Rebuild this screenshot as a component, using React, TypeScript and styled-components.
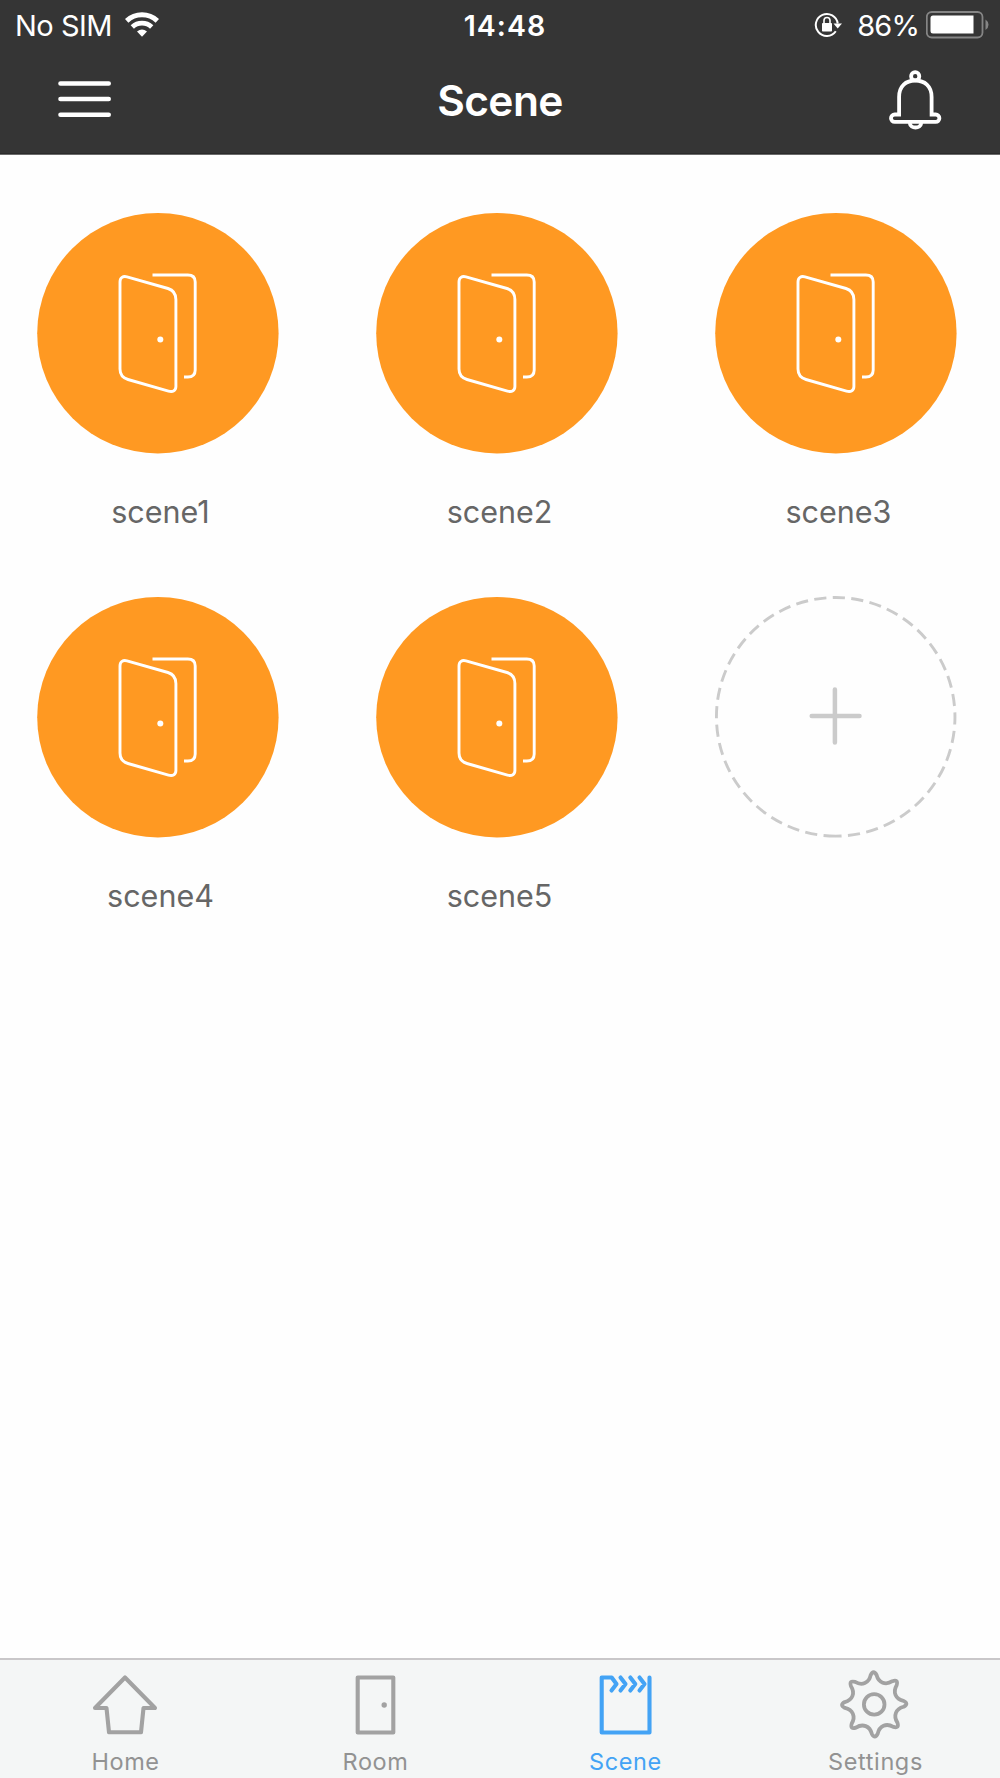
import React from "react";
import styled, { createGlobalStyle } from "styled-components";

const GlobalStyle = createGlobalStyle`
  * { box-sizing: border-box; }
  body { margin: 0; background: #fefefe; }
`;

const Screen = styled.div`
  display: flex;
  flex-direction: column;
  width: 1000px;
  height: 1778px;
  background: #fefefe;
  font-family: Inter, "Liberation Sans", sans-serif;
  overflow: hidden;
`;

const Header = styled.header`
  height: 155px;
  flex: none;
  background: #353535;
  border-bottom: 1px solid #6a6a6a;
  box-shadow: inset 0 -1px 0 #2b2b2b;
  color: #fff;
`;

const StatusBar = styled.div`
  display: grid;
  grid-template-columns: 1fr auto 1fr;
  height: 50px;
  padding: 0 11px 0 15px;
  font-size: 29px;
  line-height: 51px;
`;

const StatusGroup = styled.div<{ $end?: boolean }>`
  display: flex;
  align-items: center;
  height: 50px;
  justify-content: ${(p) => (p.$end ? "flex-end" : "flex-start")};
`;

const StatusText = styled.span<{ $spacing: number }>`
  letter-spacing: ${(p) => p.$spacing}px;
`;

const Clock = styled.span`
  font-weight: 600;
  font-size: 28.5px;
  letter-spacing: 1px;
  padding-left: 6px;
`;

const WifiIcon = styled.svg`
  margin: 0 0 1px 13px;
`;

const LockIcon = styled.svg`
  margin: 0 15px 1px 0;
`;

const BatteryIcon = styled.svg`
  margin: 0 0 1px 7px;
`;

const NavBar = styled.div`
  display: flex;
  justify-content: space-between;
  align-items: center;
  height: 104px;
  padding: 0 56px;
`;

const NavButton = styled.button`
  display: block;
  width: 57px;
  height: 104px;
  padding: 0;
  border: 0;
  background: none;
`;

const Title = styled.h1`
  margin: 0;
  height: 104px;
  font-size: 42.5px;
  line-height: 101px;
  font-weight: 600;
  letter-spacing: -0.6px;
`;

const Content = styled.main`
  flex: 1;
  padding: 58px 0 0 37px;
`;

const SceneGrid = styled.div`
  display: grid;
  grid-template-columns: repeat(3, 242px);
  column-gap: 97px;
  row-gap: 67px;
`;

const SceneCard = styled.div`
  display: flex;
  flex-direction: column;
  gap: 40px;
  height: 317px;
`;

const SceneCircle = styled.div`
  width: 242px;
  height: 241px;
`;

const SceneName = styled.div`
  padding-left: 5px;
  text-align: center;
  font-size: 30.5px;
  line-height: 36px;
  color: #666;
`;

const TabBar = styled.nav`
  display: grid;
  grid-template-columns: repeat(4, 1fr);
  flex: none;
  height: 120px;
  border-top: 2px solid #c9c7c9;
  background: #f4f6f6;
`;

const Tab = styled.div<{ $active?: boolean }>`
  display: flex;
  flex-direction: column;
  align-items: center;
  padding-top: 10px;
  color: ${(p) => (p.$active ? "#43a3f5" : "#a2a2a2")};
`;

const TabLabel = styled.span<{ $active?: boolean }>`
  margin-top: 8px;
  padding-left: 1px;
  font-size: 23.5px;
  line-height: 28px;
  letter-spacing: 0.6px;
  color: ${(p) => (p.$active ? "#43a3f5" : "#929292")};
`;

const DoorDrawing = () => (
  <svg width="242" height="241" viewBox="0 0 242 241" fill="none" stroke="#fff" strokeWidth="2.9">
    <ellipse cx="120.900" cy="120.200" rx="120.700" ry="120.200" fill="#ff9922" stroke="none" />
    <path d="M83 69 C83 64.500 86 62.800 90 63.900 L131 75.500 C136.500 77.200 138.900 81 138.900 86.500 V173.500 C138.900 177.500 136 179.300 131.500 178.100 L91 166.500 C86 165 83 161 83 156 Z" />
    <path d="M115.500 62 H150.800 Q158.200 62 158.200 69 V157 Q158.200 164 150.800 164 H147" />
    <circle cx="123.300" cy="126.500" r="3" fill="#fff" stroke="none" />
  </svg>
);

const AddDrawing = () => (
  <svg width="242" height="241" viewBox="0 0 242 241" fill="none" stroke="#cbcbcb">
    <path
      d="M120.700 238.900 A119.300 119.300 0 0 1 120.700 0.300 A119.300 119.300 0 0 1 120.700 238.900"
      transform="translate(0 .2)"
      strokeWidth="2.900"
      strokeDasharray="12.2 6.380"
      overflow="visible"
    />
    <path d="M119.900 92.500 V145.500 M96.700 119 H144.500" strokeWidth="4.500" strokeLinecap="round" />
  </svg>
);

const AddCircle = styled(SceneCircle)`
  svg { overflow: visible; }
`;

const HomeDrawing = () => (
  <path d="M35 7.500 L65 38 H53.500 L51 62.300 H19 L16.500 38 H5 Z" />
);

const RoomDrawing = () => (
  <>
    <rect x="17.700" y="7.500" width="35.600" height="55" />
    <circle cx="44.200" cy="35" r="2.700" fill="currentColor" stroke="none" />
  </>
);

const SceneDrawing = () => (
  <>
    <path d="M21.500 20.500 L26.500 14 L21.700 7.500 H11.700 V62.500 H59.500 V7.500" />
    <path d="M30.500 7.500 L35.500 14 L30.500 20.500 M40.300 7.500 L45.300 14 L40.300 20.500 M49.500 7.500 L54.500 14 L49.500 20.500" />
  </>
);

const polar = (r: number, a: number) =>
  `${(34.2 + r * Math.sin(a - 0.02)).toFixed(2)} ${(34.4 - r * Math.cos(a - 0.02)).toFixed(2)}`;

const gearPath = () => {
  const step = Math.PI / 4;
  let d = `M${polar(29.5, -0.1)}`;
  for (let i = 0; i < 8; i++) {
    const a = i * step;
    d += ` Q${polar(35, a)} ${polar(29.5, a + 0.1)}`;
    d += ` C${polar(22, a + 0.22)} ${polar(22, a + step - 0.22)} ${polar(29.5, a + step - 0.1)}`;
  }
  return d + "Z";
};

const SettingsDrawing = () => (
  <>
    <path d={gearPath()} strokeWidth="3.800" />
    <circle cx="34.200" cy="34.400" r="10.300" strokeWidth="3.800" />
  </>
);

const tabs = [
  { label: "Home", Drawing: HomeDrawing },
  { label: "Room", Drawing: RoomDrawing },
  { label: "Scene", Drawing: SceneDrawing, active: true },
  { label: "Settings", Drawing: SettingsDrawing },
];

const scenes = ["scene1", "scene2", "scene3", "scene4", "scene5"];

export default function App() {
  return (
    <Screen>
      <GlobalStyle />
      <Header>
        <StatusBar>
          <StatusGroup>
            <StatusText $spacing={-0.5}>No SIM</StatusText>
            <WifiIcon width="34" height="25" viewBox="0 0 34 25">
              <g fill="none" stroke="#fff">
                <path d="M1.700 8.800 A22.500 22.500 0 0 1 32.300 8.800" strokeWidth="5" />
                <path d="M7.300 14.900 A14.200 14.200 0 0 1 26.700 14.900" strokeWidth="4.800" />
              </g>
              <path d="M12 19.600 Q17 15.300 22 19.600 L17 24.700 Z" fill="#fff" />
            </WifiIcon>
          </StatusGroup>
          <Clock>14:48</Clock>
          <StatusGroup $end>
            <LockIcon width="28" height="26" viewBox="0 0 28 26">
              <path d="M21.800 19.300 A11 11 0 1 1 23.700 11.500" fill="none" stroke="#fff" strokeWidth="2" />
              <path d="M19.500 11.500 H28 L23.700 16.500 Z" fill="#fff" />
              <rect x="8" y="11" width="10" height="8.500" rx=".8" fill="#fff" />
              <path d="M10 11.500 V8.500 A3 3 0 0 1 16 8.500 V11.500" fill="none" stroke="#fff" strokeWidth="1.600" />
            </LockIcon>
            <StatusText $spacing={-0.9}>86%</StatusText>
            <BatteryIcon width="63" height="28" viewBox="0.500 0 63 28">
              <rect x="1.300" y="1" width="55.700" height="25.500" rx="5" fill="none" stroke="#858585" strokeWidth="1.800" />
              <path d="M7.500 4.500 H48 V22.500 H7.500 Q5 22.500 5 20 V7 Q5 4.500 7.500 4.500 Z" fill="#fff" />
              <path d="M60 8.500 Q63 10.500 63 13.700 Q63 17 60 19 Z" fill="#858585" />
            </BatteryIcon>
          </StatusGroup>
        </StatusBar>
        <NavBar>
          <NavButton aria-label="Menu">
            <svg width="57" height="104" viewBox="0 0 57 104" stroke="#fff" strokeWidth="4.600" strokeLinecap="round">
              <path d="M4.500 33.500 H52.700 M4.500 49 H52.700 M4.500 64.800 H52.700" />
            </svg>
          </NavButton>
          <Title>Scene</Title>
          <NavButton aria-label="Notifications">
            <svg width="57" height="104" viewBox="0 0 57 104" fill="none" stroke="#fff" strokeWidth="3.800">
              <circle cx="28.200" cy="26.200" r="4.100" />
              <path d="M12.100 64.500 V47 C12.100 36 19 30.500 28.200 30.500 C37.500 30.500 44.600 36 44.600 47 V64.500 H48.700 A3.700 3.700 0 0 1 48.700 71.900 H7.700 A3.700 3.700 0 0 1 7.700 64.500 Z" />
              <path d="M22.700 73 C23.500 79 33.500 79 34.300 73" />
            </svg>
          </NavButton>
        </NavBar>
      </Header>
      <Content>
        <SceneGrid>
          {scenes.map((name) => (
            <SceneCard key={name}>
              <SceneCircle>
                <DoorDrawing />
              </SceneCircle>
              <SceneName>{name}</SceneName>
            </SceneCard>
          ))}
          <SceneCard>
            <AddCircle>
              <AddDrawing />
            </AddCircle>
          </SceneCard>
        </SceneGrid>
      </Content>
      <TabBar>
        {tabs.map(({ label, Drawing, active }) => (
          <Tab key={label} $active={active}>
            <svg width="70" height="70" viewBox="0 0 70 70" fill="none" stroke="currentColor" strokeWidth="4.100" strokeLinejoin="round" strokeLinecap="round">
              <Drawing />
            </svg>
            <TabLabel $active={active}>{label}</TabLabel>
          </Tab>
        ))}
      </TabBar>
    </Screen>
  );
}
